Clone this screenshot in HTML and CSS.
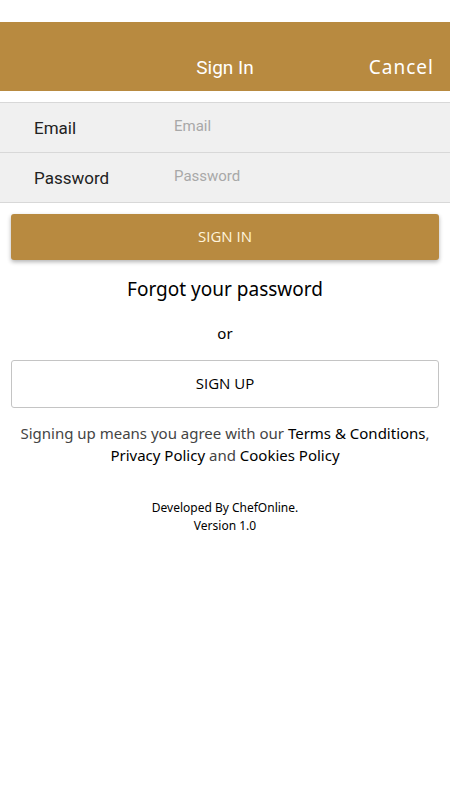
FILE: index.html
```html
<!DOCTYPE html>
<html lang="en">
<head>
<meta charset="utf-8">
<meta name="viewport" content="width=device-width, initial-scale=1">
<title>Sign In</title>
<link rel="stylesheet" href="styles.css">
</head>
<body>
<header class="bar">
  <h1 class="bar-title">Sign In</h1>
  <button class="bar-cancel" type="button">Cancel</button>
</header>
<main>
  <form>
    <div class="fields">
      <div class="field">
        <label for="email">Email</label>
        <input id="email" type="email" placeholder="Email">
      </div>
      <div class="field">
        <label for="password">Password</label>
        <input id="password" type="password" placeholder="Password">
      </div>
    </div>
    <button class="btn btn-primary" type="submit">SIGN IN</button>
  </form>
  <a class="forgot" href="#">Forgot your password</a>
  <p class="or">or</p>
  <button class="btn btn-outline" type="button">SIGN UP</button>
  <p class="terms">Signing up means you agree with our <a href="#">Terms &amp; Conditions</a>, <a href="#">Privacy Policy</a> and <a href="#">Cookies Policy</a></p>
</main>
<footer class="credits">Developed By ChefOnline.<br>Version 1.0</footer>
</body>
</html>
```
FILE: styles.css
```css
* {
  box-sizing: border-box;
}

body {
  margin: 0;
  padding-top: 22px;
  background: #fff;
  color: #000;
  font-family: "Noto Sans", "Open Sans", sans-serif;
}

button,
input {
  font-family: inherit;
}

a {
  color: #000;
  text-decoration: none;
}

.bar {
  display: grid;
  grid-template-columns: 1fr auto 1fr;
  align-items: center;
  padding: 22px 16px 0;
  height: 69px;
  background: #b88a40;
  color: #fff;
}

.bar-title {
  grid-column: 2;
  margin: 0;
  font: 400 19px/24px Roboto, sans-serif;
}

.bar-cancel {
  justify-self: end;
  padding: 0 0 2px;
  border: 0;
  background: none;
  color: #fff;
  font-size: 19px;
  line-height: 24px;
  letter-spacing: 1px;
}

.fields {
  margin-top: 11px;
  border-bottom: 1px solid #d8d8d8;
  background: #f0f0f0;
}

.field {
  display: flex;
  align-items: center;
  height: 50px;
  padding-left: 34px;
  border-top: 1px solid #d8d8d8;
  font-family: Roboto, sans-serif;
}

.field label {
  width: 140px;
  font-size: 17px;
  color: #222;
}

.field input {
  flex: 1;
  min-width: 0;
  padding: 0 0 4px;
  border: 0;
  background: none;
  font-size: 15px;
}

.field input::placeholder {
  color: #a8a8a8;
}

.btn {
  display: block;
  width: calc(100% - 22px);
  margin: 0 11px;
  padding: 0 0 2px;
  border-radius: 3px;
  font-family: "Open Sans", sans-serif;
  font-size: 15px;
}

.btn-primary {
  height: 46px;
  margin-top: 11px;
  border: 0;
  background: #b88a40;
  color: #fff4dc;
  box-shadow: 0 2px 4px rgba(0, 0, 0, 0.3);
}

.forgot {
  display: block;
  margin-top: 15px;
  font-size: 19px;
  line-height: 28px;
  text-align: center;
}

.or {
  margin: 19px 0 16px;
  font-size: 15px;
  line-height: 22px;
  text-align: center;
}

.btn-outline {
  height: 48px;
  border: 1px solid #c4c4c4;
  background: #fff;
  color: #000;
}

.terms {
  margin: 14px 11px 0;
  color: #444;
  font-size: 15px;
  line-height: 22px;
  text-align: center;
}

.credits {
  margin-top: 33px;
  font-size: 12px;
  line-height: 18px;
  text-align: center;
}
```
